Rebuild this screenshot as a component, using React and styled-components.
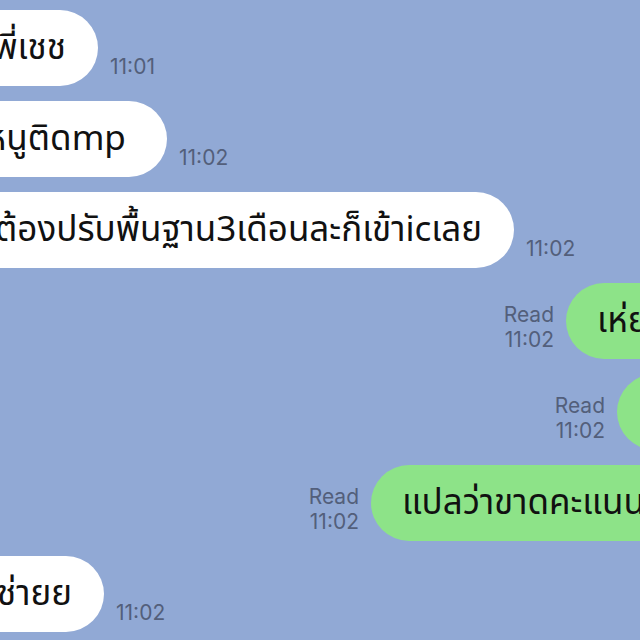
import React from 'react';
import styled, { createGlobalStyle } from 'styled-components';

const GlobalStyle = createGlobalStyle`
  html, body {
    margin: 0;
    padding: 0;
    width: 640px;
    height: 640px;
    overflow: hidden;
    background: #91a9d5;
  }
`;

const OVERFLOW = 80;

const Screen = styled.div`
  width: 640px;
  height: 640px;
  overflow: hidden;
  display: flex;
  flex-direction: column;
  gap: 15px;
  padding-top: 10px;
  box-sizing: border-box;
  background: #91a9d5;
  font-family: 'Noto Sans Thai', 'Noto Sans Thai Looped', 'Noto Sans', 'DejaVu Sans', sans-serif;
`;

const Row = styled.div`
  display: flex;
  align-items: flex-end;
  justify-content: ${(p) => (p.$mine ? 'flex-end' : 'flex-start')};
  gap: 12px;
  flex-shrink: 0;
`;

const Bubble = styled.div`
  flex-shrink: 0;
  height: 76px;
  border-radius: 38px;
  box-sizing: border-box;
  display: flex;
  align-items: center;
  overflow: hidden;
  white-space: pre;
  font-size: 35px;
  color: #111;
  background: ${(p) => (p.$mine ? '#8de388' : '#ffffff')};
  width: ${(p) => (p.$mine ? 640 - p.$edge + OVERFLOW : p.$edge + OVERFLOW)}px;
  margin-left: ${(p) => (p.$mine ? 0 : -OVERFLOW)}px;
  margin-right: ${(p) => (p.$mine ? -OVERFLOW : 0)}px;
  justify-content: ${(p) => (p.$mine ? 'flex-start' : 'flex-end')};
  padding: ${(p) => (p.$mine ? '0 0 0 31px' : '0 32px 0 0')};
`;

const Meta = styled.div`
  flex-shrink: 0;
  display: flex;
  flex-direction: column;
  align-items: flex-end;
  margin-bottom: 7px;
  font-family: Inter, 'Liberation Sans', sans-serif;
  font-size: 21px;
  line-height: 25px;
  color: #535f7b;
`;

const messages = [
  { id: 1, text: 'พี่เชช', time: '11:01', edge: 98 },
  { id: 2, text: 'หนูติดmp ', time: '11:02', edge: 167 },
  { id: 3, text: 'ต้องปรับพื้นฐาน3เดือนละก็เข้าicเลย', time: '11:02', edge: 514 },
  { id: 4, text: 'เห่ยย', time: '11:02', edge: 566, mine: true },
  { id: 5, text: 'จริงดิ', time: '11:02', edge: 617, mine: true },
  { id: 6, text: 'แปลว่าขาดคะแนนเยอะเลย', time: '11:02', edge: 371, mine: true },
  { id: 7, text: 'ใช่ายย', time: '11:02', edge: 104 },
];

const Message = ({ text, time, edge, mine }) => (
  <Row $mine={mine}>
    {mine && (
      <Meta>
        <span>Read</span>
        <span>{time}</span>
      </Meta>
    )}
    <Bubble $mine={mine} $edge={edge}>
      {text}
    </Bubble>
    {!mine && <Meta>{time}</Meta>}
  </Row>
);

const App = () => (
  <>
    <GlobalStyle />
    <Screen>
      {messages.map((m) => (
        <Message key={m.id} {...m} />
      ))}
    </Screen>
  </>
);

export default App;
